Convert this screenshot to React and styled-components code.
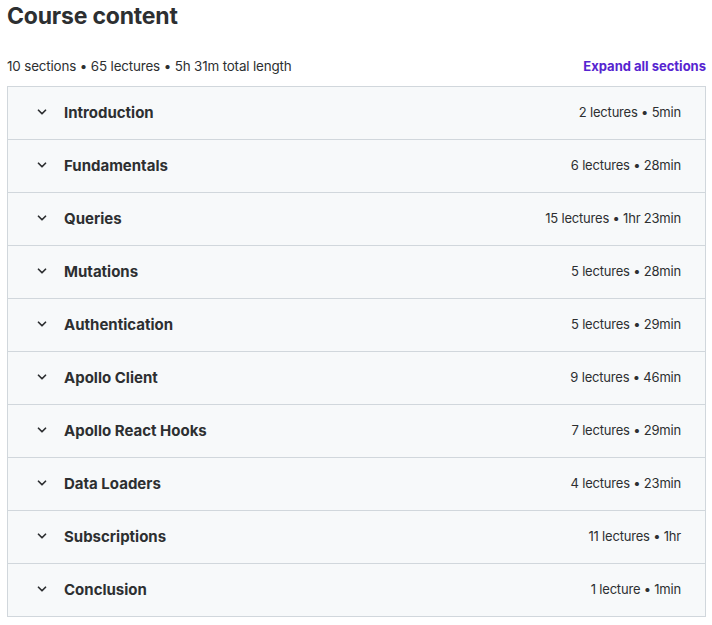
import styled, { createGlobalStyle } from "styled-components";

const Global = createGlobalStyle`
  body {
    margin: 0;
    background: #fff;
    font-family: Inter, "Noto Sans", sans-serif;
    color: #2d2f31;
  }
`;

const Page = styled.div`
  padding: 0 6px 0 7px;
`;

const Title = styled.h2`
  margin: 0;
  padding-top: 2px;
  font-size: 23px;
  font-weight: 700;
  line-height: 28px;
  color: #2d2f31;
  letter-spacing: -0.2px;
`;

const Meta = styled.div`
  display: flex;
  justify-content: space-between;
  align-items: flex-end;
  margin-top: 28px;
  padding-bottom: 12px;
`;

const Summary = styled.span`
  font-size: 13.4px;
  letter-spacing: -0.15px;
  color: #2d2f31;
`;

const Expand = styled.button`
  border: 0;
  background: none;
  padding: 0;
  font-family: inherit;
  font-size: 13px;
  font-weight: 700;
  color: #5624d0;
  cursor: pointer;
`;

const List = styled.div`
  border: 1px solid #d1d7dc;
  border-bottom: 0;
`;

const Row = styled.div`
  display: flex;
  align-items: center;
  height: 52px;
  padding: 0 24px 2px 27px;
  box-sizing: border-box;
  height: 53px;
  background: #f7f9fa;
  border-bottom: 1px solid #d1d7dc;
`;

const Chevron = styled.svg`
  width: 14px;
  height: 14px;
  margin-right: 15px;
  flex: none;
`;

const Name = styled.span`
  flex: 1;
  font-size: 15px;
  font-weight: 700;
  color: #2d2f31;
`;

const Info = styled.span`
  font-size: 13px;
  letter-spacing: -0.2px;
  color: #2d2f31;
`;

const sections = [
  ["Introduction", "2 lectures • 5min"],
  ["Fundamentals", "6 lectures • 28min"],
  ["Queries", "15 lectures • 1hr 23min"],
  ["Mutations", "5 lectures • 28min"],
  ["Authentication", "5 lectures • 29min"],
  ["Apollo Client", "9 lectures • 46min"],
  ["Apollo React Hooks", "7 lectures • 29min"],
  ["Data Loaders", "4 lectures • 23min"],
  ["Subscriptions", "11 lectures • 1hr"],
  ["Conclusion", "1 lecture • 1min"],
];

function App() {
  return (
    <Page>
      <Global />
      <Title>Course content</Title>
      <Meta>
        <Summary>10 sections • 65 lectures • 5h 31m total length</Summary>
        <Expand>Expand all sections</Expand>
      </Meta>
      <List>
        {sections.map(([name, info]) => (
          <Row key={name}>
            <Chevron viewBox="0 0 24 24" fill="none" stroke="#2d2f31" strokeWidth="3" strokeLinecap="round" strokeLinejoin="round">
              <path d="M6 9l6 6 6-6" />
            </Chevron>
            <Name>{name}</Name>
            <Info>{info}</Info>
          </Row>
        ))}
      </List>
    </Page>
  );
}

export default App;
